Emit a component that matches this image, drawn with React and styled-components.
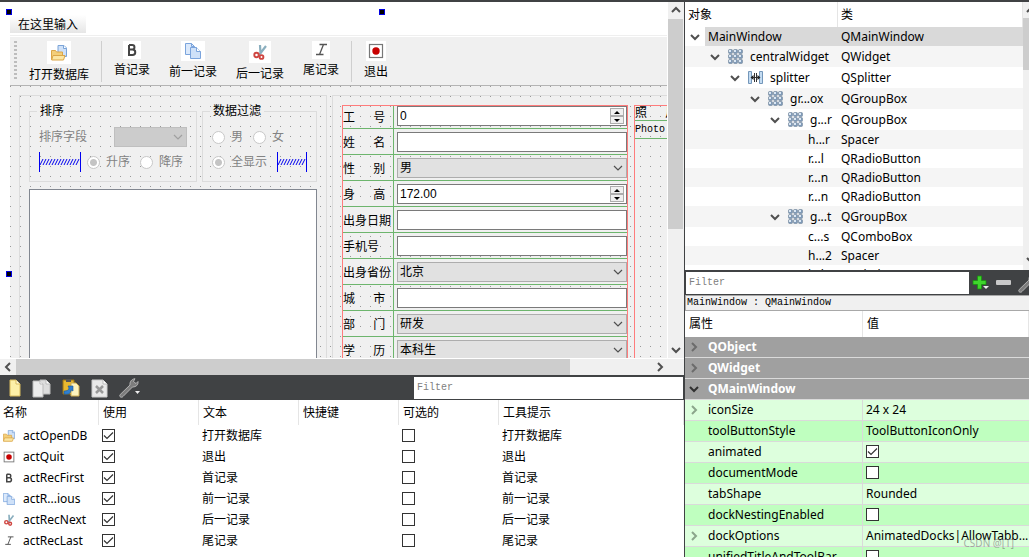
import React from 'react';
import styled, { createGlobalStyle, css } from 'styled-components';

const formRows = [
  { label: '工\u3000  号', kind: 'spin', value: '0' },
  { label: '姓\u3000  名', kind: 'text' },
  { label: '性\u3000  别', kind: 'combo', value: '男' },
  { label: '身\u3000  高', kind: 'spin', value: '172.00' },
  { label: '出身日期', kind: 'text' },
  { label: '手机号', kind: 'text' },
  { label: '出身省份', kind: 'combo', value: '北京' },
  { label: '城\u3000  市', kind: 'text' },
  { label: '部\u3000  门', kind: 'combo', value: '研发' },
  { label: '学\u3000  历', kind: 'combo', value: '本科生' },
];

const treeRows = [
  { name: 'MainWindow', type: 'QMainWindow', depth: 0, open: true, selected: true },
  { name: 'centralWidget', type: 'QWidget', depth: 1, open: true, icon: 'grid' },
  { name: 'splitter', type: 'QSplitter', depth: 2, open: true, icon: 'splitter' },
  { name: 'gr...ox', type: 'QGroupBox', depth: 3, open: true, icon: 'grid' },
  { name: 'g...r', type: 'QGroupBox', depth: 4, open: true, icon: 'grid' },
  { name: 'h...r', type: 'Spacer', depth: 5 },
  { name: 'r...l', type: 'QRadioButton', depth: 5 },
  { name: 'r...n', type: 'QRadioButton', depth: 5 },
  { name: 'r...n', type: 'QRadioButton', depth: 5 },
  { name: 'g...t', type: 'QGroupBox', depth: 4, open: true, icon: 'grid' },
  { name: 'c...s', type: 'QComboBox', depth: 5 },
  { name: 'h...2', type: 'Spacer', depth: 5 },
  { name: 'l...l', type: 'QLabel', depth: 5 },
];

const properties = [
  { name: 'iconSize', value: '24 x 24', expandable: true },
  { name: 'toolButtonStyle', value: 'ToolButtonIconOnly' },
  { name: 'animated', checked: true },
  { name: 'documentMode', checked: false },
  { name: 'tabShape', value: 'Rounded' },
  { name: 'dockNestingEnabled', checked: false },
  { name: 'dockOptions', value: 'AnimatedDocks|AllowTabb...', expandable: true },
  { name: 'unifiedTitleAndToolBar', checked: false },
];

/* ---------- icons ---------- */

const OpenIcon = ({ size }) => (
  <svg width={size} height={size} viewBox="0 0 16 16">
    <path d="M7 .5h6l2.500 2.500v8.500H7z" fill="#cfe1f8" stroke="#7ba4d8" />
    <path d="M12.500.5v3h3" fill="#fff" stroke="#7ba4d8" />
    <path d="M.5 14.500v-9h4l1 1.500h6v7.500z" fill="#f3cf7a" stroke="#dba648" />
    <path d="M2 10.500h12l-1.500 4.500H.7z" fill="#fbe6a4" stroke="#dba648" />
  </svg>
);

const QuitIcon = ({ size }) => (
  <svg width={size} height={size} viewBox="0 0 16 16">
    <rect x="1.500" y="1.500" width="13" height="13" fill="#fff" stroke="#777" strokeWidth="1.200" />
    <circle cx="8" cy="8" r="3.700" fill="#c80000" />
  </svg>
);

const BoldIcon = ({ size }) => (
  <svg width={size} height={size} viewBox="0 0 16 16" fill="none" stroke="#444" strokeWidth="2">
    <path d="M5 3v10h3.500a2.700 2.700 0 0 0 0-5.500H5M5 3h3.200a2.200 2.200 0 0 1 0 4.500" />
  </svg>
);

const ItalicIcon = ({ size }) => (
  <svg width={size} height={size} viewBox="0 0 16 16" fill="none" stroke="#555" strokeWidth="1.300">
    <path d="M6.500 2.500H14M3 12.500h7.500M10.500 2.500l-4 10" />
  </svg>
);

const CopyIcon = ({ size }) => (
  <svg width={size} height={size} viewBox="0 0 16 16" stroke="#7ba4dc">
    <path d="M.5.5h6l3 3v8h-9z" fill="#dbe9fb" />
    <path d="M6.500.5v3h3" fill="none" />
    <path d="M5.500 4.500h6l4 4v7h-10z" fill="#cfe1f8" />
    <path d="M11.500 4.500v4h4" fill="#fff" />
  </svg>
);

const CutIcon = ({ size }) => (
  <svg width={size} height={size} viewBox="0 0 16 16" fill="none">
    <path d="M8 1l.5 9M14 2L7 11" stroke="#8aaebe" strokeWidth="2.200" />
    <circle cx="4.500" cy="11" r="2.200" stroke="#cf4540" strokeWidth="1.900" />
    <circle cx="9.500" cy="13" r="1.900" stroke="#cf4540" strokeWidth="1.900" />
  </svg>
);

const GridIcon = () => (
  <svg width="15" height="15" viewBox="0 0 15 15">
    {[0, 5, 10].map((y) => [0, 5, 10].map((x) => (
      <g key={`${x}-${y}`}>
        <rect x={x + 0.5} y={y + 0.5} width="4" height="4" rx="1" fill="#7f9ab8" stroke="#64788f" strokeWidth=".5" />
        <rect x={x + 1} y={y + 1} width="2" height="2" fill="#dbe7f3" />
      </g>
    )))}
  </svg>
);

const SplitterIcon = () => (
  <svg width="15" height="15" viewBox="0 0 15 15">
    <path d="M.5 1.500h3v12h-3zM11.500 1.500h3v12h-3z" fill="#c4dcf2" stroke="#7497ba" />
    <path d="M3 7.500h9M6.500 3v9M8.500 3v9" stroke="#333" />
    <path d="M5.500 5v5L2.500 7.500zM9.500 5v5l3-2.500z" fill="#222" />
  </svg>
);

const arrows = {
  down: 'M1 3l4 4 4-4',
  up: 'M1 7l4-4 4 4',
  left: 'M7 1L3 5l4 4',
  right: 'M3 1l4 4-4 4',
};

const Arrow = ({ dir, color = '#505050', weight = 2 }) => (
  <svg width="10" height="10" viewBox="0 0 10 10" fill="none" stroke={color} strokeWidth={weight}>
    <path d={arrows[dir]} />
  </svg>
);

const NewFileIcon = () => (
  <svg width="12" height="18" viewBox="0 0 12 18">
    <path d="M1 1h6l4 4v12H1z" fill="#fdf0a8" stroke="#d9bb5c" />
    <path d="M7 1v4h4" fill="#fffbe0" stroke="#d9bb5c" />
  </svg>
);

const CopyFilesIcon = () => (
  <svg width="19" height="19" viewBox="0 0 19 19" stroke="#bbb">
    <path d="M8 1h6l4 4v10H8z" fill="#ddd" />
    <path d="M1 2h7l3 3v13H1z" fill="#ececec" />
    <path d="M8 2v3h3M14 1v4h4" fill="#fff" />
  </svg>
);

const PasteIcon = () => (
  <svg width="18" height="18" viewBox="0 0 18 18">
    <path d="M1 1h11v14H1z" fill="#e8b830" stroke="#9c7411" />
    <path d="M4 0h5v3H4z" fill="#555" />
    <path d="M9 4h5l3 3v10H9z" fill="#fdf3bd" stroke="#cfae50" />
    <path d="M2 15c5 1 7-1 7-4l2 1V7H6l1 2c0 2-2 3-5 3z" fill="#2f7fd0" stroke="#1b5594" strokeWidth=".6" />
  </svg>
);

const DeleteIcon = () => (
  <svg width="17" height="19" viewBox="0 0 17 19">
    <path d="M1 1h11l4 4v13H1z" fill="#e9e9e9" stroke="#ccc" />
    <path d="M12 1v4h4" fill="#fff" stroke="#bbb" />
    <path d="M5 7l7 7M12 7l-7 7" stroke="#999" strokeWidth="2.500" />
  </svg>
);

const WrenchIcon = () => (
  <svg width="22" height="20" viewBox="0 0 22 20">
    <path
      d="M1.500 19c-1-.5-1-1.500-.3-2.500L11 7C10.500 4 12.500 1 16 .7l-1.500 2.800L17 5.500l2-2c.5 3.500-2 5.500-5.500 5.500L4 18.500c-.6.8-1.500 1-2.500.5z"
      fill="#7d7d7d"
      stroke="#c4c4c4"
      strokeWidth=".8"
    />
    <path d="M16 13h5l-2.500 3z" fill="#eee" />
  </svg>
);

const PlusIcon = () => (
  <svg width="17" height="16" viewBox="0 0 17 16">
    <path d="M5.500 1h4v4.500H14v4H9.500V14h-4V9.500H1v-4h4.500z" fill="#3fd52c" stroke="#18930f" strokeWidth=".8" />
    <path d="M11 11h6l-3 3z" fill="#eee" />
  </svg>
);

const MinusIcon = () => (
  <svg width="15" height="16" viewBox="0 0 15 16">
    <rect y="5" width="15" height="5" rx="1" fill="#c9c9c9" />
  </svg>
);

const SpacerMark = ({ width }) => {
  const steps = [];
  for (let x = 1; x < width - 3; x += 3) steps.push(`M${x} 13l3-6`);
  return (
    <svg width={width} height="20" viewBox={`0 0 ${width} 20`} fill="none" stroke="#0000f0">
      <path d={`M.5 0v20M${width - 0.5} 0v20`} />
      <path d={steps.join('')} />
    </svg>
  );
};

const actions = [
  { name: 'actOpenDB', text: '打开数据库', Icon: OpenIcon },
  { name: 'actQuit', text: '退出', Icon: QuitIcon },
  { name: 'actRecFirst', text: '首记录', Icon: BoldIcon },
  { name: 'actR...ious', text: '前一记录', Icon: CopyIcon },
  { name: 'actRecNext', text: '后一记录', Icon: CutIcon },
  { name: 'actRecLast', text: '尾记录', Icon: ItalicIcon },
];

const toolGroups = [
  [{ text: '打开数据库', Icon: OpenIcon, width: 24, height: 23 }],
  [
    { text: '首记录', Icon: BoldIcon, width: 18, height: 18 },
    { text: '前一记录', Icon: CopyIcon, width: 24, height: 20 },
    { text: '后一记录', Icon: CutIcon, width: 22, height: 22 },
    { text: '尾记录', Icon: ItalicIcon, width: 18, height: 18 },
  ],
  [{ text: '退出', Icon: QuitIcon, width: 20, height: 20 }],
];

/* ---------- app ---------- */

function FormField({ row }) {
  const id = `field-${row.label.replace(/\s/g, '')}`;
  return (
    <FormRow>
      <FormLabel htmlFor={id}>{row.label}</FormLabel>
      <FieldCell>
        {row.kind === 'text' && <TextBox id={id} type="text" />}
        {row.kind === 'spin' && (
          <SpinBox>
            <SpinInput id={id} type="text" defaultValue={row.value} />
            <SpinButtons>
              <SpinButton aria-label="增加">
                <svg width="6" height="3" viewBox="0 0 6 3"><path d="M0 3l3-3 3 3z" /></svg>
              </SpinButton>
              <SpinButton aria-label="减少">
                <svg width="6" height="3" viewBox="0 0 6 3"><path d="M0 0l3 3 3-3z" /></svg>
              </SpinButton>
            </SpinButtons>
          </SpinBox>
        )}
        {row.kind === 'combo' && (
          <Combo>
            <ComboSelect id={id} defaultValue={row.value}>
              <option>{row.value}</option>
            </ComboSelect>
            <Arrow dir="down" weight={1.200} />
          </Combo>
        )}
      </FieldCell>
    </FormRow>
  );
}

function FormDesigner() {
  return (
    <Designer>
      <Canvas>
        <FormWindow>
          <Handle />
          <Handle $top />
          <Handle $left />
          <MenuBar><MenuItem>在这里输入</MenuItem></MenuBar>
          <FormToolBar>
            <Grip />
            {toolGroups.map((group) => (
              <ToolGroup key={group[0].text}>
                {group.map(({ text, Icon, width, height }) => (
                  <ToolButton key={text}>
                    <ToolIcon $width={width} $height={height}><Icon size={16} /></ToolIcon>
                    {text}
                  </ToolButton>
                ))}
              </ToolGroup>
            ))}
          </FormToolBar>
          <CentralWidget>
            <LeftGroup>
              <GroupRow>
                <GroupBox $width="168px">
                  <legend>排序</legend>
                  <OptionRow>
                    <FieldLabel htmlFor="sortField">排序字段</FieldLabel>
                    <SortCombo>
                      <ComboSelect id="sortField" disabled />
                      <Arrow dir="down" weight={1.200} color="#a0a0a0" />
                    </SortCombo>
                  </OptionRow>
                  <OptionRow>
                    <SpacerMark width={42} />
                    <Option><Radio name="order" defaultChecked disabled />升序</Option>
                    <Option><Radio name="order" disabled />降序</Option>
                  </OptionRow>
                </GroupBox>
                <GroupBox $width="115px">
                  <legend>数据过滤</legend>
                  <OptionRow>
                    <Option><Radio name="filter" disabled />男</Option>
                    <Option><Radio name="filter" disabled />女</Option>
                  </OptionRow>
                  <OptionRow>
                    <Option><Radio name="filter" defaultChecked disabled />全显示</Option>
                    <SpacerMark width={30} />
                  </OptionRow>
                </GroupBox>
              </GroupRow>
              <TableView />
            </LeftGroup>
            <RightGroup>
              <FormLayout>
                {formRows.map((row) => <FormField key={row.label} row={row} />)}
              </FormLayout>
              <PhotoLayout>
                <PhotoTitle>{'照\u3000  片'}</PhotoTitle>
                <PhotoName>Photo</PhotoName>
              </PhotoLayout>
            </RightGroup>
          </CentralWidget>
        </FormWindow>
      </Canvas>
      <VScroll>
        <ScrollArrow><Arrow dir="up" /></ScrollArrow>
        <VThumb />
        <ScrollArrow><Arrow dir="down" /></ScrollArrow>
      </VScroll>
      <HScroll>
        <ScrollArrow><Arrow dir="left" /></ScrollArrow>
        <HThumb />
        <ScrollArrow><Arrow dir="right" /></ScrollArrow>
      </HScroll>
    </Designer>
  );
}

function ActionEditor() {
  return (
    <Dock>
      <DockBar>
        <DockTools>
          <IconButton aria-label="新建"><NewFileIcon /></IconButton>
          <IconButton aria-label="复制"><CopyFilesIcon /></IconButton>
          <IconButton aria-label="粘贴"><PasteIcon /></IconButton>
          <IconButton aria-label="删除"><DeleteIcon /></IconButton>
          <IconButton aria-label="配置"><WrenchIcon /></IconButton>
        </DockTools>
        <ActionFilter placeholder="Filter" aria-label="Filter" />
      </DockBar>
      <ActionTable>
        <colgroup>
          <FixedCol $width="99px" />
          <FixedCol $width="100px" />
          <FixedCol $width="100px" />
          <FixedCol $width="100px" />
          <FixedCol $width="100px" />
          <col />
        </colgroup>
        <thead>
          <tr>
            {['名称', '使用', '文本', '快捷键', '可选的', '工具提示'].map((title) => (
              <ActionHead key={title}>{title}</ActionHead>
            ))}
          </tr>
        </thead>
        <tbody>
          {actions.map(({ name, text, Icon }) => (
            <tr key={name}>
              <ActionCell>
                <ActionName><Icon size={12} />{name}</ActionName>
              </ActionCell>
              <ActionCell><CheckBox defaultChecked aria-label={`${name} 使用`} /></ActionCell>
              <ActionCell>{text}</ActionCell>
              <ActionCell />
              <ActionCell><CheckBox aria-label={`${name} 可选的`} /></ActionCell>
              <ActionCell>{text}</ActionCell>
            </tr>
          ))}
        </tbody>
      </ActionTable>
    </Dock>
  );
}

function ObjectInspector() {
  return (
    <Inspector>
      <TreeTable>
        <colgroup>
          <FixedCol $width="153px" />
          <col />
        </colgroup>
        <thead>
          <tr>
            <TreeHead>对象</TreeHead>
            <TreeHead>类</TreeHead>
          </tr>
        </thead>
        <tbody>
          {treeRows.map((row, i) => (
            <TreeRow key={i} $tall={!!row.icon}>
              <td>
                <TreeName $depth={row.depth}>
                  <TreeToggle>{row.open && <Arrow dir="down" />}</TreeToggle>
                  <TreeLabel $selected={row.selected}>
                    {row.icon === 'grid' && <GridIcon />}
                    {row.icon === 'splitter' && <SplitterIcon />}
                    {row.name}
                  </TreeLabel>
                </TreeName>
              </td>
              <TreeType $selected={row.selected}>{row.type}</TreeType>
            </TreeRow>
          ))}
        </tbody>
      </TreeTable>
      <TreeScroll>
        <ScrollArrow><Arrow dir="up" /></ScrollArrow>
        <TreeThumb />
        <ScrollArrow><Arrow dir="down" /></ScrollArrow>
      </TreeScroll>
    </Inspector>
  );
}

function PropertyEditor() {
  return (
    <Dock>
      <DockBar>
        <PropertyFilter placeholder="Filter" aria-label="Filter" />
        <PropertyTools>
          <IconButton aria-label="添加"><PlusIcon /></IconButton>
          <IconButton aria-label="移除"><MinusIcon /></IconButton>
          <IconButton aria-label="配置"><WrenchIcon /></IconButton>
        </PropertyTools>
      </DockBar>
      <ObjectName>MainWindow : QMainWindow</ObjectName>
      <PropertyTable>
        <colgroup>
          <FixedCol $width="178px" />
          <col />
        </colgroup>
        <thead>
          <tr>
            <PropertyHead>属性</PropertyHead>
            <PropertyHead>值</PropertyHead>
          </tr>
        </thead>
        <tbody>
          {['QObject', 'QWidget', 'QMainWindow'].map((name, i) => (
            <tr key={name}>
              <ClassCell colSpan="2">
                <PropertyName>
                  <PropertyToggle>
                    <Arrow dir={i === 2 ? 'down' : 'right'} color={i === 2 ? '#303030' : '#6c6c6c'} />
                  </PropertyToggle>
                  {name}
                </PropertyName>
              </ClassCell>
            </tr>
          ))}
          {properties.map((p) => (
            <PropertyRow key={p.name}>
              <PropertyCell>
                <PropertyName>
                  <PropertyToggle>{p.expandable && <Arrow dir="right" color="#8ba58b" />}</PropertyToggle>
                  {p.name}
                </PropertyName>
              </PropertyCell>
              <PropertyValue>
                {p.value || <CheckBox defaultChecked={p.checked} aria-label={p.name} />}
              </PropertyValue>
            </PropertyRow>
          ))}
        </tbody>
      </PropertyTable>
      <Watermark>CSDN @[T]</Watermark>
    </Dock>
  );
}

function App() {
  return (
    <Shell>
      <GlobalStyle />
      <LeftPane>
        <FormDesigner />
        <ActionEditor />
      </LeftPane>
      <RightPane>
        <ObjectInspector />
        <PropertyEditor />
      </RightPane>
    </Shell>
  );
}

export default App;

const GlobalStyle = createGlobalStyle`
  * {
    box-sizing: border-box;
  }

  body {
    margin: 0;
    background: #fff;
    color: #000;
    font: 12px/16px "Noto Sans", "Noto Sans CJK SC", sans-serif;
    overflow: hidden;
  }

  button, input, select {
    margin: 0;
    padding: 0;
    border: 0;
    border-radius: 0;
    font: inherit;
    color: inherit;
  }

  svg {
    display: block;
    flex: none;
  }

  table {
    border-collapse: separate;
    border-spacing: 0;
    table-layout: fixed;
    width: 100%;
  }

  td, th {
    padding: 0;
    text-align: left;
    font-weight: 400;
    white-space: nowrap;
  }
`;

const Shell = styled.div`
  display: grid;
  grid-template-columns: minmax(0, 1fr) 345px;
  height: 100vh;
  border-top: 2px solid #404244;
`;

const LeftPane = styled.div`
  display: grid;
  grid-template-rows: minmax(0, 1fr) 182px;
  min-height: 0;
`;

const RightPane = styled.div`
  display: grid;
  grid-template-rows: minmax(0, 14fr) minmax(0, 15fr);
  min-height: 0;
  border-left: 1px solid #404244;
`;

/* form designer */

const Designer = styled.section`
  display: grid;
  grid-template: minmax(0, 1fr) 17px / minmax(0, 1fr) 16px;
  background: #f0f0f0;
`;

const Canvas = styled.div`
  overflow: hidden;
  padding: 11px 0 0 10px;
  background: #fff;
  border-right: 1px solid #fff;
`;

const FormWindow = styled.div`
  position: relative;
  display: flex;
  flex-direction: column;
  width: 744px;
  height: 522px;
`;

const Handle = styled.i`
  position: absolute;
  left: ${({ $top }) => ($top ? 'calc(50% - 3px)' : '-4px')};
  top: ${({ $left }) => ($left ? 'calc(50% - 3px)' : '-4px')};
  width: 6px;
  height: 6px;
  background: #000;
  border: 1px solid #0000e0;
`;

const MenuBar = styled.div`
  height: 23px;
  padding: 2px 0;
  border-bottom: 1px solid #efefef;
`;

const MenuItem = styled.button`
  height: 18px;
  padding: 1px 8px 0;
  background: linear-gradient(#fff, #e6e6e6);
`;

const FormToolBar = styled.div`
  display: flex;
  height: 50px;
  padding: 4px;
  background: #f0f0f0;
  border-top: 1px solid #fff;
  border-bottom: 1px solid #b4b4b4;
`;

const Grip = styled.span`
  width: 3px;
  background: repeating-linear-gradient(#bdbdbd 0 2px, transparent 2px 4px);
`;

const ToolGroup = styled.div`
  display: flex;
  align-items: flex-start;
  gap: 19px;
  height: 41px;
  padding: 0 12px;
  border-left: 1px solid #cfcfcf;

  &:nth-child(2) {
    border-left: 0;
  }
`;

const ToolButton = styled.button`
  display: flex;
  flex-direction: column;
  align-items: center;
  gap: 3px;
  background: none;
`;

const ToolIcon = styled.span`
  display: grid;
  place-items: center;
  width: ${({ $width }) => $width}px;
  height: ${({ $height }) => $height}px;
  background: #fff;
`;

const CentralWidget = styled.div`
  display: flex;
  flex: 1;
  gap: 5px;
  min-height: 0;
  padding: 9px;
  background: #f0f0f0 url("data:image/svg+xml,%3Csvg xmlns='http://www.w3.org/2000/svg' width='10' height='10'%3E%3Crect width='1' height='1' fill='%23999'/%3E%3C/svg%3E");
`;

const outline = css`
  border: 1px solid #dcdcdc;
`;

const LeftGroup = styled.div`
  ${outline}
  display: flex;
  flex-direction: column;
  gap: 7px;
  padding: 7px 9px 9px;
`;

const RightGroup = styled.div`
  ${outline}
  display: flex;
  flex: 1;
  gap: 6px;
  min-width: 0;
  padding: 9px;
`;

const GroupRow = styled.div`
  display: flex;
  gap: 5px;
`;

const GroupBox = styled.fieldset`
  ${outline}
  width: ${({ $width }) => $width};
  min-width: 0;
  margin: 0;
  padding: 8px 9px 9px;

  legend {
    padding: 0 3px;
    margin-left: -2px;
  }
`;

const OptionRow = styled.div`
  display: flex;
  align-items: center;
  gap: 10px;
  height: 20px;
  color: #838383;

  & > svg + label {
    margin-left: -4px;
  }

  & + & {
    margin-top: 5px;
  }
`;

const FieldLabel = styled.label`
  flex: 1;
`;

const Option = styled.label`
  display: flex;
  align-items: center;
  gap: 6px;
  white-space: nowrap;
`;

const Radio = styled.input.attrs({ type: 'radio' })`
  appearance: none;
  width: 13px;
  height: 13px;
  border: 1px solid #c8c8c8;
  border-radius: 50%;
  background: #fff;

  &:checked {
    background: radial-gradient(#c4c4c4 0 3px, #fff 4px);
  }
`;

const TableView = styled.div`
  flex: 1;
  background: #fff;
  border: 1px solid #828790;
`;

const Combo = styled.div`
  display: grid;
  align-items: center;
  width: 100%;

  & > * {
    grid-area: 1 / 1;
  }

  & > svg {
    justify-self: end;
    margin-right: 4px;
    pointer-events: none;
  }
`;

const SortCombo = styled(Combo)`
  width: 73px;
`;

const ComboSelect = styled.select`
  appearance: none;
  width: 100%;
  height: 20px;
  padding: 0 2px;
  background: #e1e1e1;
  border: 1px solid #adadad;

  &:disabled {
    background: #ccc;
    border-color: #bfbfbf;
    opacity: 1;
  }
`;

const FormLayout = styled.div`
  flex: none;
  width: 286px;
  border: 1px solid #ff7c7c;
`;

const FormLabel = styled.label`
  display: flex;
  align-items: center;
  width: 51px;
  padding-top: 2px;
  border-right: 1px solid #6db56d;
  white-space: pre;
`;

const FieldCell = styled.div`
  display: flex;
  flex: 1;
  padding: 3px 0 2px 3px;
`;

const FormRow = styled.div`
  display: flex;
  border-bottom: 1px solid #6db56d;

  &:first-child ${FieldCell} {
    padding-top: 0;
  }
`;

const TextBox = styled.input`
  width: 100%;
  height: 20px;
  background: #fff;
  border: 1px solid #7a7a7a;
`;

const SpinBox = styled.div`
  display: flex;
  width: 100%;
  height: 20px;
  padding: 1px 2px;
  background: #fff;
  border: 1px solid #7a7a7a;
`;

const SpinInput = styled.input`
  flex: 1;
  min-width: 0;
  background: none;
  font: 12px/16px "Liberation Sans", sans-serif;
`;

const SpinButtons = styled.span`
  display: grid;
  width: 14px;
`;

const SpinButton = styled.button`
  display: grid;
  place-items: center;
  background: #f0f0f0;
  border: 1px solid #adadad;
`;

const PhotoLayout = styled.div`
  flex: 1;
  border: 1px solid #ff7c7c;
  overflow: hidden;
`;

const PhotoTitle = styled.div`
  height: 15px;
  line-height: 14px;
  border-bottom: 1px solid #6db56d;
  white-space: pre;
`;

const PhotoName = styled.div`
  height: 18px;
  border-bottom: 1px solid #6db56d;
  font: 10px/18px "Liberation Mono", monospace;
`;

const VScroll = styled.div`
  display: flex;
  flex-direction: column;
`;

const HScroll = styled.div`
  display: flex;
  padding-right: 16px;
  border-top: 1px solid #fff;
  grid-column: 1 / -1;
`;

const ScrollArrow = styled.button`
  display: grid;
  flex: none;
  place-items: center;
  width: 16px;
  height: 16px;
  background: none;
`;

const VThumb = styled.div`
  height: 59%;
  margin: 1px 1px auto 0;
  background: #cdcdcd;
`;

const HThumb = styled.div`
  width: 83%;
  margin-right: auto;
  background: #cdcdcd;
`;

/* docks */

const Dock = styled.section`
  position: relative;
  display: flex;
  flex-direction: column;
  min-height: 0;
  overflow: hidden;
`;

const DockBar = styled.div`
  display: flex;
  flex: none;
  height: 25px;
  padding: 2px 1px 1px;
  background: #404244;
`;

const DockTools = styled.div`
  display: flex;
  flex: 1;
  align-items: center;
  gap: 11px;
  padding-left: 8px;
`;

const PropertyTools = styled(DockTools)`
  flex: none;
  gap: 7px;
  width: 59px;
  padding-left: 3px;
`;

const IconButton = styled.button`
  background: none;
`;

const FilterBox = styled.input`
  min-width: 0;
  padding: 0 3px;
  background: #fff;
  font: 10px/16px "Liberation Mono", monospace;

  &::placeholder {
    color: #808080;
    opacity: 1;
  }
`;

const ActionFilter = styled(FilterBox)`
  width: 269px;
`;

const PropertyFilter = styled(FilterBox)`
  flex: 1;
`;

const FixedCol = styled.col`
  width: ${({ $width }) => $width};
`;

const CheckBox = styled.input.attrs({ type: 'checkbox' })`
  appearance: none;
  display: block;
  width: 13px;
  height: 13px;
  background: #fff;
  border: 1px solid #333;

  &:checked {
    background: #fff url("data:image/svg+xml,%3Csvg xmlns='http://www.w3.org/2000/svg' viewBox='0 0 11 11'%3E%3Cpath d='M1 5.500l3 3L10 2.500' fill='none' stroke='%23333' stroke-width='1.200'/%3E%3C/svg%3E");
  }
`;

const ActionTable = styled.table`
  background: #fff;
`;

const ActionHead = styled.th`
  height: 25px;
  padding: 0 4px;
  border-right: 1px solid #e5e5e5;

  &:first-child {
    padding: 0 3px;
  }
`;

const ActionCell = styled.td`
  height: 21px;
  padding: 0 3px;
`;

const ActionName = styled.span`
  display: flex;
  align-items: center;
  gap: 8px;
`;

/* object inspector */

const Inspector = styled.section`
  display: flex;
  min-height: 0;
  overflow: hidden;
`;

const TreeTable = styled.table`
  flex: 1;
  align-self: flex-start;
`;

const TreeHead = styled.th`
  height: 25px;
  padding: 0 3px;
  border-right: 1px solid #e5e5e5;
`;

const TreeRow = styled.tr`
  height: ${({ $tall }) => ($tall ? 21 : 19)}px;

  &:nth-child(even) {
    background: #f5f5f5;
  }
`;

const TreeName = styled.div`
  display: flex;
  align-items: center;
  padding-left: ${({ $depth }) => $depth * 20}px;
`;

const TreeToggle = styled.span`
  display: grid;
  flex: none;
  place-items: center;
  width: 20px;
`;

const TreeLabel = styled.span`
  display: flex;
  flex: 1;
  align-items: center;
  gap: 7px;
  height: 19px;
  padding-left: 3px;
  background: ${({ $selected }) => ($selected ? '#d9d9d9' : 'none')};
`;

const TreeType = styled.td`
  padding-left: 3px;
  background: ${({ $selected }) => ($selected ? '#d9d9d9' : 'none')};
`;

const TreeScroll = styled.div`
  flex: none;
  width: 6px;
  background: #f0f0f0;
  overflow: hidden;
`;

const TreeThumb = styled.div`
  height: 52px;
  margin-bottom: 182px;
  background: #cdcdcd;
`;

/* property editor */

const ObjectName = styled.div`
  flex: none;
  height: 16px;
  padding-left: 1px;
  background: #f0f0f0;
  border: 1px solid #a8a8a8;
  border-width: 1px 0 1px 1px;
  font: 10px/14px "Liberation Mono", monospace;
`;

const PropertyTable = styled.table`
  flex: none;
`;

const PropertyHead = styled.th`
  height: 26px;
  padding: 0 4px;
  border-right: 1px solid #e5e5e5;
`;

const gridLine = css`
  height: 21px;
  border-bottom: 1px solid #dadada;
`;

const ClassCell = styled.th`
  ${gridLine}
  background: #a0a0a0;
  color: #fff;
  font-weight: 700;
`;

const PropertyRow = styled.tr`
  background: #dfd;

  &:nth-child(odd) {
    background: #bfffbf;
  }
`;

const PropertyCell = styled.td`
  ${gridLine}
  border-right: 1px solid #dadada;
`;

const PropertyName = styled.div`
  display: flex;
  align-items: center;
`;

const PropertyToggle = styled.span`
  display: grid;
  place-items: center;
  width: 17px;
  margin-right: 6px;
`;

const PropertyValue = styled.td`
  ${gridLine}
  padding-left: 3px;
  overflow: hidden;
`;

const Watermark = styled.span`
  position: absolute;
  right: 15px;
  bottom: 6px;
  color: rgba(120, 120, 120, 0.6);
  font-size: 10px;
`;
